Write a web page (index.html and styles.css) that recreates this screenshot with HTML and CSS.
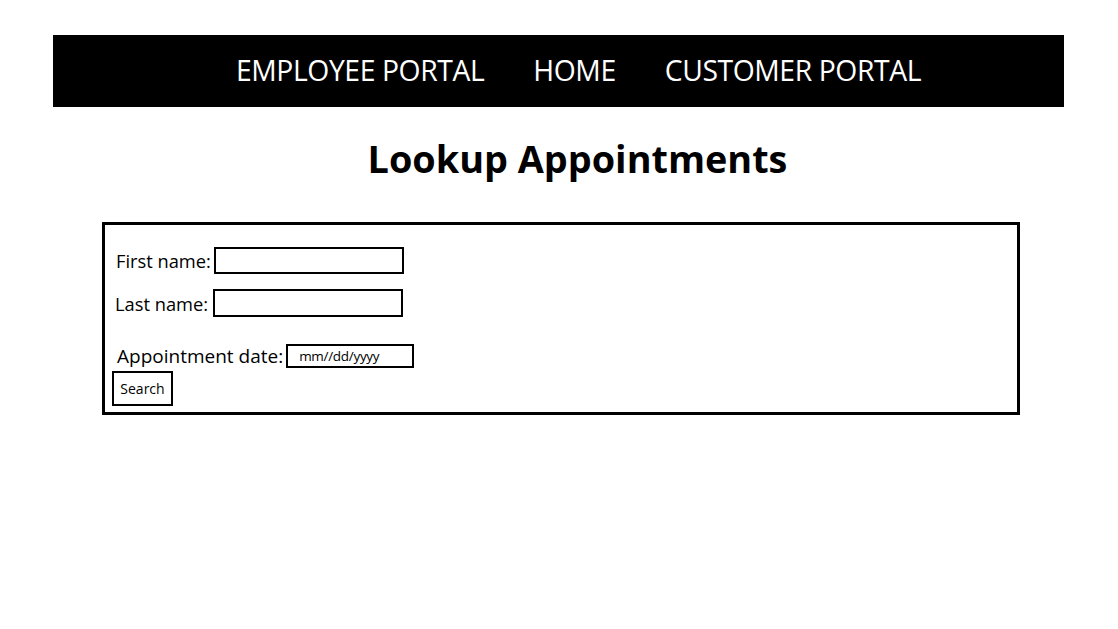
FILE: index.html
```html
<!DOCTYPE html>
<html>
<head>
<meta charset="utf-8">
<title>Lookup Appointments</title>
<link rel="stylesheet" href="styles.css">
</head>
<body>
<nav class="topnav">
  <ul class="nav-list">
    <li><a href="#">EMPLOYEE PORTAL</a></li>
    <li><a href="#">HOME</a></li>
    <li><a href="#">CUSTOMER PORTAL</a></li>
  </ul>
</nav>
<h1 class="title">Lookup Appointments</h1>
<form class="lookup">
  <div class="row"><label>First name:</label><input class="text" type="text"></div>
  <div class="row last"><label>Last name:</label><input class="text tall" type="text"></div>
  <div class="row date-row"><label>Appointment date:</label><span class="date">mm//dd/yyyy</span></div>
  <button class="search" type="button">Search</button>
</form>
</body>
</html>
```
FILE: styles.css
```css
html, body {
  margin: 0;
  padding: 0;
  background: #fff;
  font-family: "Open Sans", "Noto Sans", sans-serif;
  color: #000;
}
body {
  padding: 35px 54px 0 53px;
}
.topnav {
  background: #000;
  height: 72px;
  display: flex;
  align-items: center;
  justify-content: center;
}
.nav-list {
  list-style: none;
  margin: -3px 0 0 0;
  padding: 0 0 0 40px;
  display: flex;
  gap: 49px;
}
.nav-list a {
  color: #fff;
  text-decoration: none;
  font-size: 28.3px;
  letter-spacing: -0.4px;
}
.title {
  text-align: center;
  font-size: 37.8px;
  font-weight: 700;
  margin: 27px 0 0 38px;
  line-height: 50px;
  letter-spacing: 0;
}
.lookup {
  margin: 38px 44px 0 49px;
  border: 3px solid #000;
  padding: 22px 7px 6px 7px;
  display: flex;
  flex-direction: column;
  align-items: flex-start;
}
.row {
  display: flex;
  align-items: center;
  font-size: 18.3px;
  height: 27px;
  margin-bottom: 15px;
  padding-left: 4px;
}
.row.last {
  padding-left: 3px;
  height: 28px;
}
.row label {
  margin-right: 3px;
}
.row.last label {
  margin-right: 5px;
}
.text {
  width: 186px;
  height: 23px;
  border: 2px solid #000;
  padding: 0;
  margin: 0;
  box-sizing: content-box;
}
.text.tall {
  height: 24px;
}
.date-row {
  margin-top: 10px;
  margin-bottom: 2px;
  padding-left: 5px;
  font-size: 19px;
}
.date-row label {
  margin-right: 3px;
}
.date {
  display: inline-block;
  width: 113px;
  height: 20px;
  border: 2px solid #000;
  font-size: 13.5px;
  line-height: 20px;
  padding-left: 11px;
  box-sizing: content-box;
  letter-spacing: -0.3px;
}
.search {
  font-family: inherit;
  font-size: 14px;
  background: #fff;
  border: 2px solid #000;
  padding: 0 5px;
  height: 35px;
  width: 61px;
  color: #000;
}
```
